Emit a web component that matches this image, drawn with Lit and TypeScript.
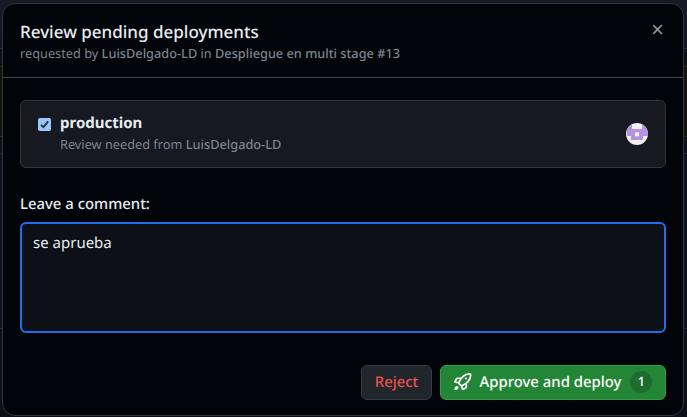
import { LitElement, html, css } from "lit";
import { customElement } from "lit/decorators.js";

@customElement("app-root")
export class AppRoot extends LitElement {
  static styles = css`
    :host { display: flex; box-sizing: border-box; width: 687px; height: 417px; padding: 3px 3px 1px 2px; overflow: hidden;
      background: linear-gradient(#161a25 0 12px, #10151f 48px, #252b33 48px 49px, #0d1117 49px 66px, #2b2419 66px 67px, #15130f 67px 136px, #2b2419 136px 137px, #0d1117 137px 153px, #1d2634 153px 154px, #0d131c 154px 328px, #20262e 328px 329px, #0d1117 329px);
      font: 15px/22px "Noto Sans", sans-serif; color: #e6edf3; text-rendering: geometricPrecision; }
    * { box-sizing: border-box; }
    .dialog { flex: 1; display: flex; flex-direction: column; background: #010409; border: 1px solid #30363d; border-radius: 13px; }
    header { display: flex; justify-content: space-between; height: 74px; flex: none; border-bottom: 1px solid #3d444d; padding: 16px 17px 0; }
    h1 { margin: 0; font-size: 17px; line-height: 23px; font-weight: 500; white-space: nowrap; }
    .sub { font-size: 12.76px; line-height: 20px; color: #7d8590; white-space: nowrap; }
    .sub b, .need b { font-weight: 500; }
    .close { width: 17px; height: 17px; margin: 1px 0 0; fill: #9198a1; }
    .main { padding: 22px 17px 0; display: flex; flex-direction: column; }
    .env { height: 68px; display: flex; border: 1px solid #30363d; border-radius: 6px; background: #161920; padding: 11px 17px 0 17px; }
    .check { width: 13px; height: 13px; margin: 6px 9px 0 0; border-radius: 2px; background: #99c8ff; }
    .names { flex: 1; }
    .name { font-weight: 700; line-height: 22px; }
    .need { font-size: 12.76px; line-height: 20px; color: #7d8590; }
    .avatar { width: 22px; height: 22px; margin-top: 11px; border-radius: 50%; background: #f0f0f0; }
    .label { margin-top: 25px; font-weight: 500; line-height: 22px; font-size: 14.9px; }
    .box { margin-top: 7px; height: 111px; border: 2px solid #1f6feb; border-radius: 6px; background: #0d1117; padding: 8px 11px; }
    footer { display: flex; justify-content: flex-end; gap: 8px; padding: 32px 17px 0; }
    .btn { height: 35px; display: flex; align-items: center; border: 1px solid #363b42; border-radius: 6px; font-weight: 500; font-size: 14.9px; white-space: nowrap; padding-bottom: 2px; }
    .reject { width: 71px; justify-content: center; background: #21262d; color: #e5534b; }
    .approve { width: 226px; padding-left: 13px; background: #238636; border-color: #389a4a; color: #fff; }
    .rocket { width: 17.5px; height: 17.5px; margin-right: 8px; fill: #fff; }
    .count { width: 22px; height: 22px; margin-left: 9px; border-radius: 50%; background: #1d6d31; text-align: center; font-size: 12.8px; line-height: 21px; }
  `;

  render() {
    return html`<section class="dialog">
      <header>
        <div><h1><span>Review pending deployments</span></h1>
          <div class="sub"><span>requested by <b>LuisDelgado-LD</b> in <b>Despliegue en multi stage #13</b></span></div></div>
        <svg class="close" viewBox="0 0 16 16"><path d="M3.72 3.72a.75.75 0 0 1 1.06 0L8 6.94l3.22-3.22a.749.749 0 0 1 1.275.326.749.749 0 0 1-.215.734L9.06 8l3.22 3.22a.749.749 0 0 1-.326 1.275.749.749 0 0 1-.734-.215L8 9.06l-3.22 3.22a.751.751 0 0 1-1.042-.018.751.751 0 0 1-.018-1.042L6.94 8 3.72 4.78a.75.75 0 0 1 0-1.06Z"/></svg>
      </header>
      <div class="main">
        <div class="env">
          <svg class="check" viewBox="0 0 13 13"><path d="M3 6.8 5.4 9.2 10.2 3.4" fill="none" stroke="#2a3038" stroke-width="1.9"/></svg>
          <div class="names"><div class="name">production</div>
            <div class="need">Review needed from <b>LuisDelgado-LD</b></div></div>
          <svg class="avatar" viewBox="0 0 22 22"><path fill="#b392e0" fill-rule="evenodd" d="M0 2H6V6H16V2H22V13H17V17H5V13H1ZM9 9.3V13.3H13V9.3Z"/></svg>
        </div>
        <div class="label">Leave a comment:</div>
        <div class="box">se aprueba</div>
      </div>
      <footer>
        <div class="btn reject">Reject</div>
        <div class="btn approve">
          <svg class="rocket" viewBox="0 0 16 16"><path d="M14.064 0h.186C15.216 0 16 .784 16 1.75v.186a8.752 8.752 0 0 1-2.564 6.186l-.458.459c-.314.314-.641.616-.979.904v3.207c0 .608-.315 1.172-.833 1.49l-2.774 1.707a.749.749 0 0 1-1.11-.418l-.954-3.102a1.214 1.214 0 0 1-.145-.125L3.754 9.816a1.218 1.218 0 0 1-.124-.145L.528 8.717a.749.749 0 0 1-.418-1.11l1.71-2.774A1.748 1.748 0 0 1 3.31 4h3.204c.288-.338.59-.665.904-.979l.459-.458A8.749 8.749 0 0 1 14.064 0ZM8.938 3.623h-.002l-.458.458c-.76.76-1.437 1.598-2.02 2.5l-1.5 2.317 2.143 2.143 2.317-1.5c.902-.583 1.74-1.26 2.499-2.02l.459-.458a7.25 7.25 0 0 0 2.123-5.127V1.75a.25.25 0 0 0-.25-.25h-.186a7.249 7.249 0 0 0-5.125 2.123ZM3.56 14.56c-.732.732-2.334 1.045-3.005 1.148a.234.234 0 0 1-.201-.064.234.234 0 0 1-.064-.201c.103-.671.416-2.273 1.15-3.003a1.502 1.502 0 1 1 2.12 2.12Zm6.94-3.935c-.088.06-.177.118-.266.175l-2.35 1.521.548 1.783 1.949-1.2a.25.25 0 0 0 .119-.213ZM3.678 8.116 5.2 5.766c.058-.09.117-.178.176-.266H3.309a.25.25 0 0 0-.213.119l-1.2 1.95ZM12 5a1 1 0 1 1-2 0 1 1 0 0 1 2 0Z"/></svg>
          <span>Approve and deploy</span><span class="count">1</span>
        </div>
      </footer>
    </section>`;
  }
}
